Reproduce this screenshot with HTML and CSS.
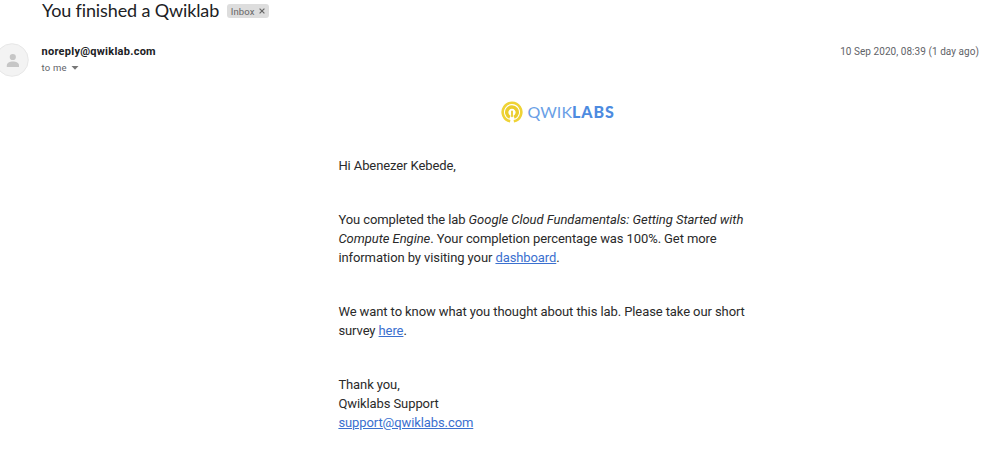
FILE: index.html
```html
<!DOCTYPE html>
<html lang="en">
<head>
<meta charset="utf-8">
<title>You finished a Qwiklab</title>
<link rel="stylesheet" href="styles.css">
</head>
<body>
<main class="mail">
  <header class="subject">
    <h1 class="subject-title">You finished a Qwiklab</h1>
    <span class="label"><span>Inbox</span><svg class="label-close" viewBox="0 0 6 6"><path d="M.6.6l4.8 4.8M5.4.6L.6 5.4"/></svg></span>
  </header>
  <section class="sender">
    <svg class="avatar" viewBox="0 0 34 34"><circle class="avatar-bg" cx="17" cy="17" r="16.3"/><circle class="avatar-person" cx="17.8" cy="14" r="3.1"/><path class="avatar-person" d="M11.8 24v-1.6c0-2.5 3-3.9 6.1-3.9s6.1 1.4 6.1 3.9V24z"/></svg>
    <div class="sender-text">
      <strong class="from">noreply@qwiklab.com</strong>
      <span class="to"><span>to me</span><svg class="caret" viewBox="0 0 8 4"><path d="M.5 0h7L4 3.7z"/></svg></span>
    </div>
    <time class="date">10 Sep 2020, 08:39 (1 day ago)</time>
  </section>
  <article class="body">
    <div class="logo">
      <svg class="logo-mark" viewBox="0 0 22 22"><path class="ring-outer" d="M9.2 20.2a9.3 9.3 0 1 1 3.6 0"/><path class="ring-inner" d="M8.9 16.2a5.3 5.3 0 1 1 4.2 0"/><path class="stem" d="M11 10.5v4.8"/></svg>
      <span class="logo-text">QWIK<b>LABS</b></span>
    </div>
    <p>Hi Abenezer Kebede,</p>
    <p>You completed the lab <i>Google Cloud Fundamentals: Getting Started with</i><br><i>Compute Engine</i>. Your completion percentage was 100%. Get more<br>information by visiting your <a>dashboard</a>.</p>
    <p>We want to know what you thought about this lab. Please take our short<br>survey <a>here</a>.</p>
    <p>Thank you,<br>Qwiklabs Support<br><a>support@qwiklabs.com</a></p>
  </article>
</main>
</body>
</html>
```

FILE: styles.css
```css
body {
  margin: 0;
  background: #fff;
  color: #2a2a2a;
  font-family: Roboto, "Liberation Sans", sans-serif;
  overflow: hidden;
}
.subject {
  display: flex;
  align-items: center;
  gap: 8px;
  height: 22px;
  padding-left: 42px;
}
.subject-title {
  margin: -2px 0 0;
  font: 400 18px/22px Lato, sans-serif;
  color: #202124;
  letter-spacing: -0.13px;
  white-space: nowrap;
}
.label {
  display: flex;
  align-items: center;
  justify-content: center;
  gap: 5px;
  width: 42px;
  height: 14px;
  border-radius: 3px;
  background: #ddd;
  color: #666;
  font-size: 9.5px;
  letter-spacing: 0.1px;
}
.label-close {
  width: 6px;
  height: 6px;
  fill: none;
  stroke: #666;
  stroke-width: 1.2;
}
.sender {
  display: flex;
  align-items: flex-start;
  height: 34px;
  margin-top: 21px;
  padding-right: 8px;
}
.avatar {
  flex: none;
  width: 34px;
  height: 34px;
  margin-left: -5px;
}
.avatar-bg { fill: #f3f3f3; stroke: #e2e2e2; stroke-width: .8; }
.avatar-person { fill: #c6c6c6; }
.sender-text {
  display: flex;
  flex-direction: column;
  margin-left: 12.5px;
}
.from {
  font-size: 11px;
  line-height: 18px;
  letter-spacing: 0.26px;
  color: #202124;
}
.to {
  display: flex;
  align-items: center;
  gap: 4.5px;
  font-size: 9.5px;
  line-height: 14px;
  letter-spacing: 0.2px;
  color: #5f6368;
}
.caret { width: 8px; height: 4px; fill: #777; }
.date {
  margin-left: auto;
  font-size: 10px;
  line-height: 18px;
  letter-spacing: 0.05px;
  color: #5f6368;
}
.body {
  width: 440px;
  margin: 24px 0 0 338.4px;
  font-size: 13px;
  line-height: 19px;
  letter-spacing: -0.092px;
}
.body p {
  margin: 0 0 35px;
  white-space: nowrap;
}
.body i { letter-spacing: -0.04px; }
.body a {
  color: #3b70cf;
  text-decoration: underline;
}
.logo {
  display: flex;
  align-items: center;
  gap: 4px;
  height: 22px;
  margin: 0 0 33px 163px;
}
.logo-mark { width: 22px; height: 22px; fill: none; }
.ring-outer { stroke: #efd336; stroke-width: 2.6; }
.ring-inner { stroke: #ebcd2c; stroke-width: 3.4; }
.stem { stroke: #ebcd2c; stroke-width: 1.8; stroke-linecap: round; }
.logo-text {
  font: 400 16px/22px Lato, sans-serif;
  color: #6a9fe6;
  letter-spacing: 0.1px;
}
.logo-text b { color: #4d8be0; font-weight: 900; letter-spacing: 0.9px; }
```
